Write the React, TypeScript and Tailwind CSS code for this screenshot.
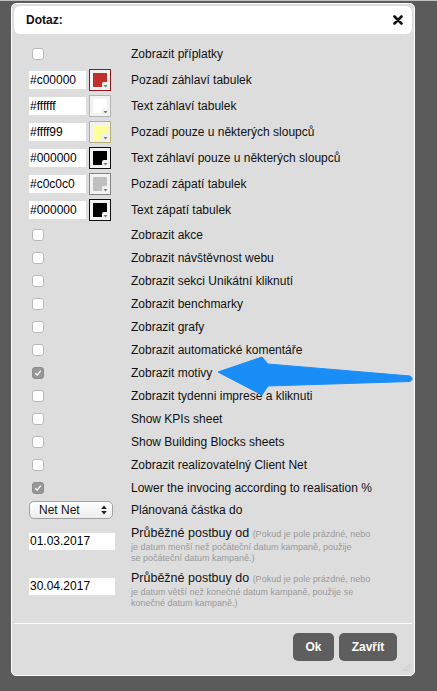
import React from "react";

type ColorRow = { value: string; fill: string; edge: string; label: string };

const colorRows: ColorRow[] = [
  { value: "#c00000", fill: "#c0302a", edge: "#8a1a1a", label: "Pozadí záhlaví tabulek" },
  { value: "#ffffff", fill: "#ffffff", edge: "#b4b4b4", label: "Text záhlaví tabulek" },
  { value: "#ffff99", fill: "#ffff99", edge: "#b8b070", label: "Pozadí pouze u některých sloupců" },
  { value: "#000000", fill: "#000000", edge: "#111111", label: "Text záhlaví pouze u některých sloupců" },
  { value: "#c0c0c0", fill: "#c0c0c0", edge: "#858585", label: "Pozadí zápatí tabulek" },
  { value: "#000000", fill: "#000000", edge: "#111111", label: "Text zápatí tabulek" },
];

const checkRows: { label: string; checked?: boolean }[] = [
  { label: "Zobrazit akce" },
  { label: "Zobrazit návštěvnost webu" },
  { label: "Zobrazit sekci Unikátní kliknutí" },
  { label: "Zobrazit benchmarky" },
  { label: "Zobrazit grafy" },
  { label: "Zobrazit automatické komentáře" },
  { label: "Zobrazit motivy", checked: true },
  { label: "Zobrazit tydenni imprese a kliknuti" },
  { label: "Show KPIs sheet" },
  { label: "Show Building Blocks sheets" },
  { label: "Zobrazit realizovatelný Client Net" },
  { label: "Lower the invocing according to realisation %", checked: true },
];

function Checkbox({ checked }: { checked?: boolean }) {
  if (checked) {
    return (
      <span className="ml-[3px] flex h-[12px] w-[12px] items-center justify-center rounded-[3px] border border-[#8c8c8c] bg-[#979797]">
        <svg width="8" height="8" viewBox="0 0 8 8">
          <path d="M1.3 4.2 L3.2 6.1 L6.8 1.6" fill="none" stroke="#fff" strokeWidth="1.3" />
        </svg>
      </span>
    );
  }
  return <span className="ml-[3px] block h-[12px] w-[12px] rounded-[3px] border border-[#b8b8b8] bg-white" />;
}

function Swatch({ fill, edge }: { fill: string; edge: string }) {
  return (
    <span
      className="relative block h-[22px] w-[22px] border bg-[#f2f2f2]"
      style={{ borderColor: edge }}
    >
      <span className="absolute inset-[3px] rounded-br-[3px]" style={{ background: fill }} />
      <span className="absolute bottom-[2px] right-[2px] h-[6px] w-[6px] rounded-tl-[2px] bg-[#f2f2f2]" />
      <svg className="absolute bottom-[2px] right-[2px]" width="5" height="4" viewBox="0 0 5 4">
        <path d="M0.5 1 L4.5 1 L2.5 3.5 Z" fill="#777" />
      </svg>
    </span>
  );
}

function Label({ children }: { children: React.ReactNode }) {
  return <div className="whitespace-nowrap text-[12px] text-[#111]">{children}</div>;
}

export default function App() {
  return (
    <div className="relative h-[691px] w-[437px] overflow-hidden bg-[#5b5b5b] font-['Liberation_Sans',Arial,sans-serif]">
      <div className="h-[1px] bg-[#c2c2c2]" />
      <div className="relative ml-[11px] mt-[2px] flex h-[673px] w-[404px] flex-col rounded-[5px] border border-white bg-[#dddddd] p-[2px]">
        {/* header */}
        <div className="flex h-[28px] items-center justify-between rounded-[6px] bg-white pl-[12px] pr-[9px]">
          <span className="text-[12px] font-bold text-[#111]">Dotaz:</span>
          <svg width="10" height="10" viewBox="0 0 10 10">
            <path d="M1.5 1.5 L8.5 8.5 M8.5 1.5 L1.5 8.5" stroke="#111" strokeWidth="2.6" strokeLinecap="round" />
          </svg>
        </div>

        {/* body */}
        <div className="mt-[7px] pl-[15px]">
          <div className="flex h-[26px] items-center">
            <div className="w-[102px]">
              <Checkbox />
            </div>
            <Label>Zobrazit příplatky</Label>
          </div>

          {colorRows.map((r, i) => (
            <div key={i} className="flex h-[26px] items-center">
              <div className="flex w-[102px] items-center gap-[3px]">
                <span className="block h-[18px] w-[57px] bg-white pl-[1px] text-[12px] leading-[18px] text-black">
                  {r.value}
                </span>
                <Swatch fill={r.fill} edge={r.edge} />
              </div>
              <Label>{r.label}</Label>
            </div>
          ))}

          {checkRows.map((r, i) => (
            <div key={i} className="flex h-[23px] items-center">
              <div className="w-[102px]">
                <Checkbox checked={r.checked} />
              </div>
              <Label>{r.label}</Label>
            </div>
          ))}

          <div className="flex h-[22px] items-center">
            <div className="w-[102px]">
              <div className="flex h-[18px] w-[84px] items-center justify-between rounded-[5px] border border-[#a2a2a2] bg-gradient-to-b from-white to-[#ededed] pl-[9px] pr-[5px]">
                <span className="text-[12px] text-[#111]">Net Net</span>
                <svg width="6" height="10" viewBox="0 0 6 10">
                  <path d="M3 0.5 L5.8 4 L0.2 4 Z M3 9.5 L5.8 6 L0.2 6 Z" fill="#222" />
                </svg>
              </div>
            </div>
            <Label>Plánovaná částka do</Label>
          </div>

          <div className="flex h-[46px] items-start">
            <div className="mt-[12px] w-[102px]">
              <span className="block h-[17px] w-[86px] bg-white pl-[1px] text-[12px] leading-[17px] text-black">01.03.2017</span>
            </div>
            <div className="mt-[4px]">
              <div className="whitespace-nowrap text-[12.5px] leading-[16px] text-[#111]">
                Průběžné postbuy od{" "}
                <span className="text-[9px] text-[#9a9a9a]">(Pokud je pole prázdné, nebo</span>
              </div>
              <div className="whitespace-nowrap text-[9px] leading-[11px] text-[#9a9a9a]">
                je datum menší než počáteční datum kampaně, použije
                <br />
                se počáteční datum kampaně.)
              </div>
            </div>
          </div>

          <div className="flex h-[45px] items-start">
            <div className="mt-[11px] w-[102px]">
              <span className="block h-[17px] w-[86px] bg-white pl-[1px] text-[12px] leading-[17px] text-black">30.04.2017</span>
            </div>
            <div className="mt-[3px]">
              <div className="whitespace-nowrap text-[12.5px] leading-[16px] text-[#111]">
                Průběžné postbuy do{" "}
                <span className="text-[9px] text-[#9a9a9a]">(Pokud je pole prázdné, nebo</span>
              </div>
              <div className="whitespace-nowrap text-[9px] leading-[11px] text-[#9a9a9a]">
                je datum větší než konečné datum kampaně, použije se
                <br />
                konečné datum kampaně.)
              </div>
            </div>
          </div>
        </div>

        {/* footer */}
        <div className="mt-auto flex justify-end gap-[5px] border-t border-white pb-[12px] pr-[15px] pt-[9px]">
          <button className="h-[28px] w-[41px] rounded-[5px] bg-[#5e5e5e] text-[12px] font-bold text-white">Ok</button>
          <button className="h-[28px] w-[58px] rounded-[5px] bg-[#5e5e5e] text-[12px] font-bold text-white">Zavřít</button>
        </div>
        <svg className="absolute bottom-[3px] right-[3px]" width="10" height="10" viewBox="0 0 10 10">
          <path d="M9 2 L2 9 M9 5 L5 9 M9 8 L8 9" stroke="#c6c6c6" strokeWidth="1" />
        </svg>
      </div>

      {/* annotation arrow */}
      <svg className="pointer-events-none absolute left-0 top-0" width="437" height="691" viewBox="0 0 437 691">
        <path
          d="M218 372 L262 357 L268 364 L410 376 Q414.5 378.8 410 381.5 L268 386 L262 395 Z"
          fill="#1b8df6"
          stroke="#1b8df6"
          strokeWidth="1"
          strokeLinejoin="round"
        />
      </svg>
    </div>
  );
}
